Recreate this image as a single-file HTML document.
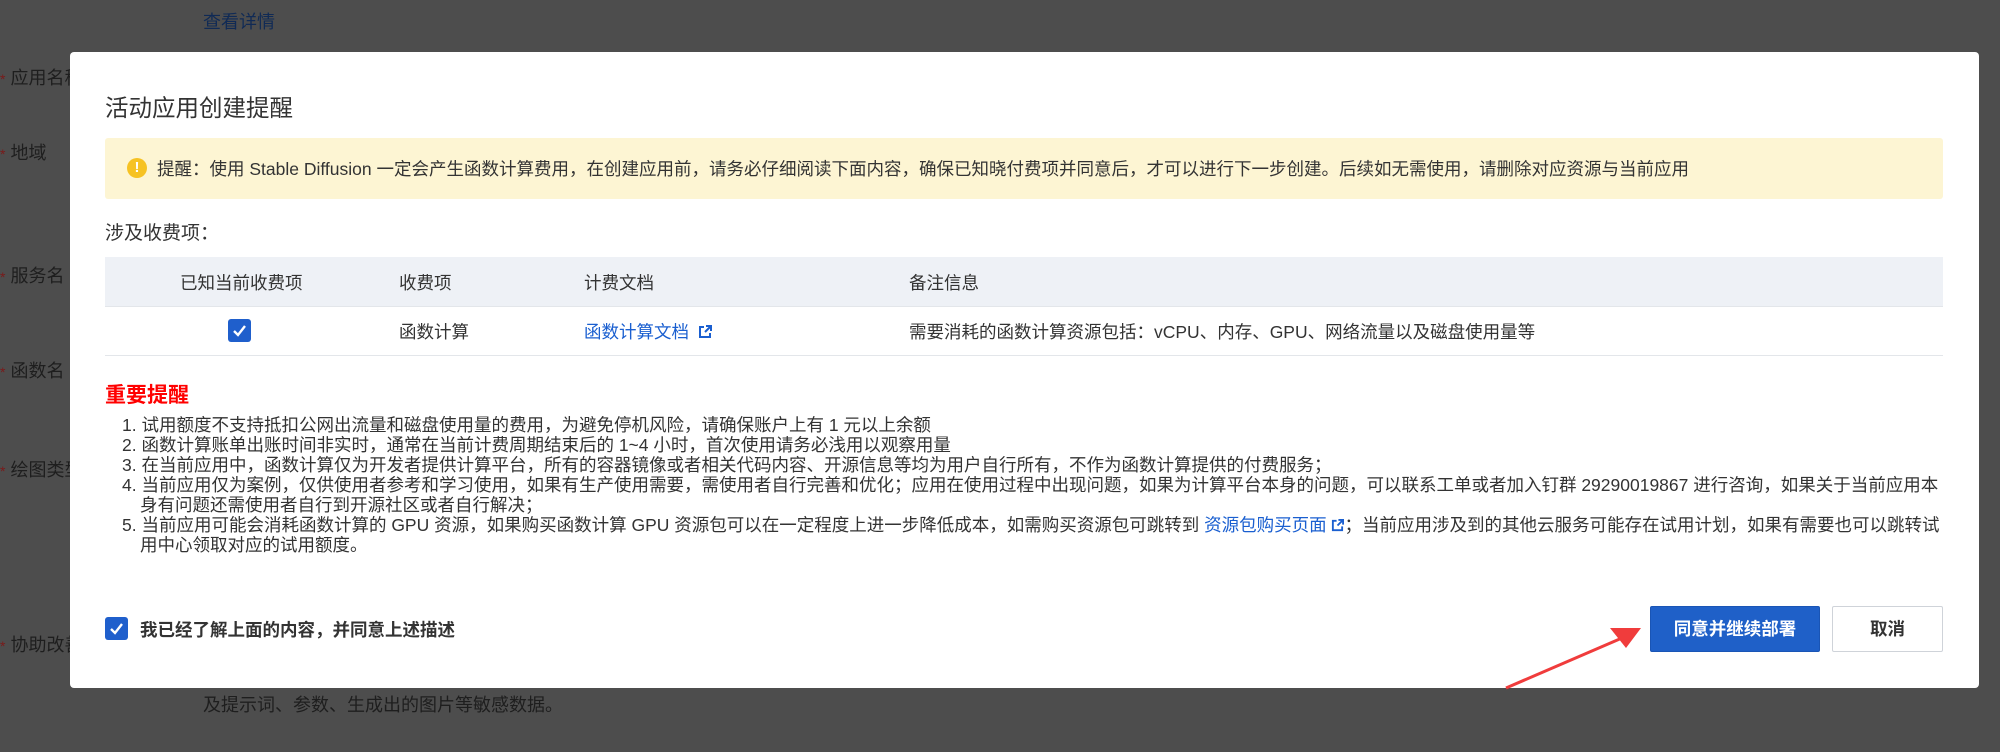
<!DOCTYPE html>
<html><head><meta charset="utf-8"><style>
*{margin:0;padding:0;box-sizing:border-box}
body{width:2000px;height:752px;background:#4d4d4d;position:relative;overflow:hidden;font-family:"Liberation Sans","Noto Sans CJK SC",sans-serif;color:#333}
.bg{position:absolute;color:#1e1e1e;font-size:18px;white-space:nowrap}
.bg b{color:#7a1a1a;font-weight:normal;font-size:14px}
.modal{position:absolute;left:70px;top:52px;width:1909px;height:636px;background:#fff;border-radius:4px}
.a{position:absolute;white-space:nowrap}
.title{left:35px;top:37px;font-size:23.5px;color:#333}
.alert{left:35px;top:86px;width:1838px;height:61px;background:#fdf5d3;border-radius:3px}
.alert .ic{position:absolute;left:22px;top:20px;width:20px;height:20px;border-radius:50%;background:#f6c223;color:#fff;font-size:15px;font-weight:bold;text-align:center;line-height:20px}
.alert .t{position:absolute;left:52px;top:18px;font-size:17.5px;color:#333}
.sub{left:35px;top:166px;font-size:19px}
.thead{left:35px;top:205px;width:1838px;height:50px;background:#eef1f6;border-bottom:1px solid #e3e6ea}
.row{left:35px;top:255px;width:1838px;height:49px;border-bottom:1px solid #e3e6ea}
.th{position:absolute;top:13px;font-size:17.5px;color:#333}
.cb{position:absolute;width:23px;height:23px;background:#1f5fcc;border-radius:3px}
.cb svg{position:absolute;left:4px;top:5px}
.link{color:#1a5fd0}
.red{left:35px;top:327px;font-size:21px;font-weight:bold;color:#f00}
.list{left:52px;top:363px;font-size:17.5px;line-height:20px;color:#333;white-space:normal;width:1822px}
.list div{padding-left:18px;text-indent:-18px}
.btn{position:absolute;top:554px;height:46px;font-size:17.5px;font-weight:bold;text-align:center;line-height:44px;border-radius:2px}
</style></head><body>
<div class="bg" style="left:203px;top:8px;color:#102a55">查看详情</div>
<div class="bg" style="left:0;top:64px"><b>*</b> 应用名称</div>
<div class="bg" style="left:0;top:139px"><b>*</b> 地域</div>
<div class="bg" style="left:0;top:262px"><b>*</b> 服务名</div>
<div class="bg" style="left:0;top:357px"><b>*</b> 函数名</div>
<div class="bg" style="left:0;top:456px"><b>*</b> 绘图类型</div>
<div class="bg" style="left:0;top:631px"><b>*</b> 协助改善</div>
<div class="bg" style="left:203px;top:691px">及提示词、参数、生成出的图片等敏感数据。</div>
<div class="modal">
<div class="a title">活动应用创建提醒</div>
<div class="a alert"><div class="ic">!</div><div class="t">提醒：使用 Stable Diffusion 一定会产生函数计算费用，在创建应用前，请务必仔细阅读下面内容，确保已知晓付费项并同意后，才可以进行下一步创建。后续如无需使用，请删除对应资源与当前应用</div></div>
<div class="a sub">涉及收费项：</div>
<div class="a thead">
<div class="th" style="left:75px">已知当前收费项</div>
<div class="th" style="left:294px">收费项</div>
<div class="th" style="left:479px">计费文档</div>
<div class="th" style="left:804px">备注信息</div>
</div>
<div class="a row">
<div class="cb" style="left:123px;top:12px"><svg width="15" height="13" viewBox="0 0 15 13"><path d="M2 7l4 4 7-9" stroke="#fff" stroke-width="2.4" fill="none"/></svg></div>
<div class="th" style="left:294px;top:12px">函数计算</div>
<div class="th link" style="left:479px;top:12px">函数计算文档 <svg width="14" height="14" viewBox="0 0 14 14" style="vertical-align:-1px;margin-left:4px"><path d="M6 2H2v10h10V8M8 1h5v5M13 1L7 7" stroke="#1a5fd0" stroke-width="2" fill="none"/></svg></div>
<div class="th" style="left:804px;top:12px">需要消耗的函数计算资源包括：vCPU、内存、GPU、网络流量以及磁盘使用量等</div>
</div>
<div class="a red">重要提醒</div>
<div class="a list">
<div>1. 试用额度不支持抵扣公网出流量和磁盘使用量的费用，为避免停机风险，请确保账户上有 1 元以上余额</div>
<div>2. 函数计算账单出账时间非实时，通常在当前计费周期结束后的 1~4 小时，首次使用请务必浅用以观察用量</div>
<div>3. 在当前应用中，函数计算仅为开发者提供计算平台，所有的容器镜像或者相关代码内容、开源信息等均为用户自行所有，不作为函数计算提供的付费服务；</div>
<div>4. 当前应用仅为案例，仅供使用者参考和学习使用，如果有生产使用需要，需使用者自行完善和优化；应用在使用过程中出现问题，如果为计算平台本身的问题，可以联系工单或者加入钉群 29290019867 进行咨询，如果关于当前应用本身有问题还需使用者自行到开源社区或者自行解决；</div>
<div>5. 当前应用可能会消耗函数计算的 GPU 资源，如果购买函数计算 GPU 资源包可以在一定程度上进一步降低成本，如需购买资源包可跳转到 <span class="link">资源包购买页面 <svg width="13" height="13" viewBox="0 0 14 14" style="vertical-align:-1px"><path d="M6 2H2v10h10V8M8 1h5v5M13 1L7 7" stroke="#1a5fd0" stroke-width="2" fill="none"/></svg></span>；当前应用涉及到的其他云服务可能存在试用计划，如果有需要也可以跳转试用中心领取对应的试用额度。</div>
</div>
<div class="cb" style="left:35px;top:565px"><svg width="15" height="13" viewBox="0 0 15 13"><path d="M2 7l4 4 7-9" stroke="#fff" stroke-width="2.4" fill="none"/></svg></div>
<div class="a" style="left:70px;top:565px;font-size:17.5px;font-weight:bold;color:#333">我已经了解上面的内容，并同意上述描述</div>
<div class="btn" style="left:1580px;width:170px;background:#1f60c8;color:#fff;border:1px solid #1a55b5">同意并继续部署</div>
<div class="btn" style="left:1762px;width:111px;background:#fff;color:#333;border:1px solid #cfd3d9">取消</div>
</div>
<svg style="position:absolute;left:0;top:0" width="2000" height="752"><path d="M1506 688L1622 638" stroke="#f03c3c" stroke-width="3"/><path d="M1641 628L1610 628L1626 648Z" fill="#f03c3c"/></svg>
</body></html>
